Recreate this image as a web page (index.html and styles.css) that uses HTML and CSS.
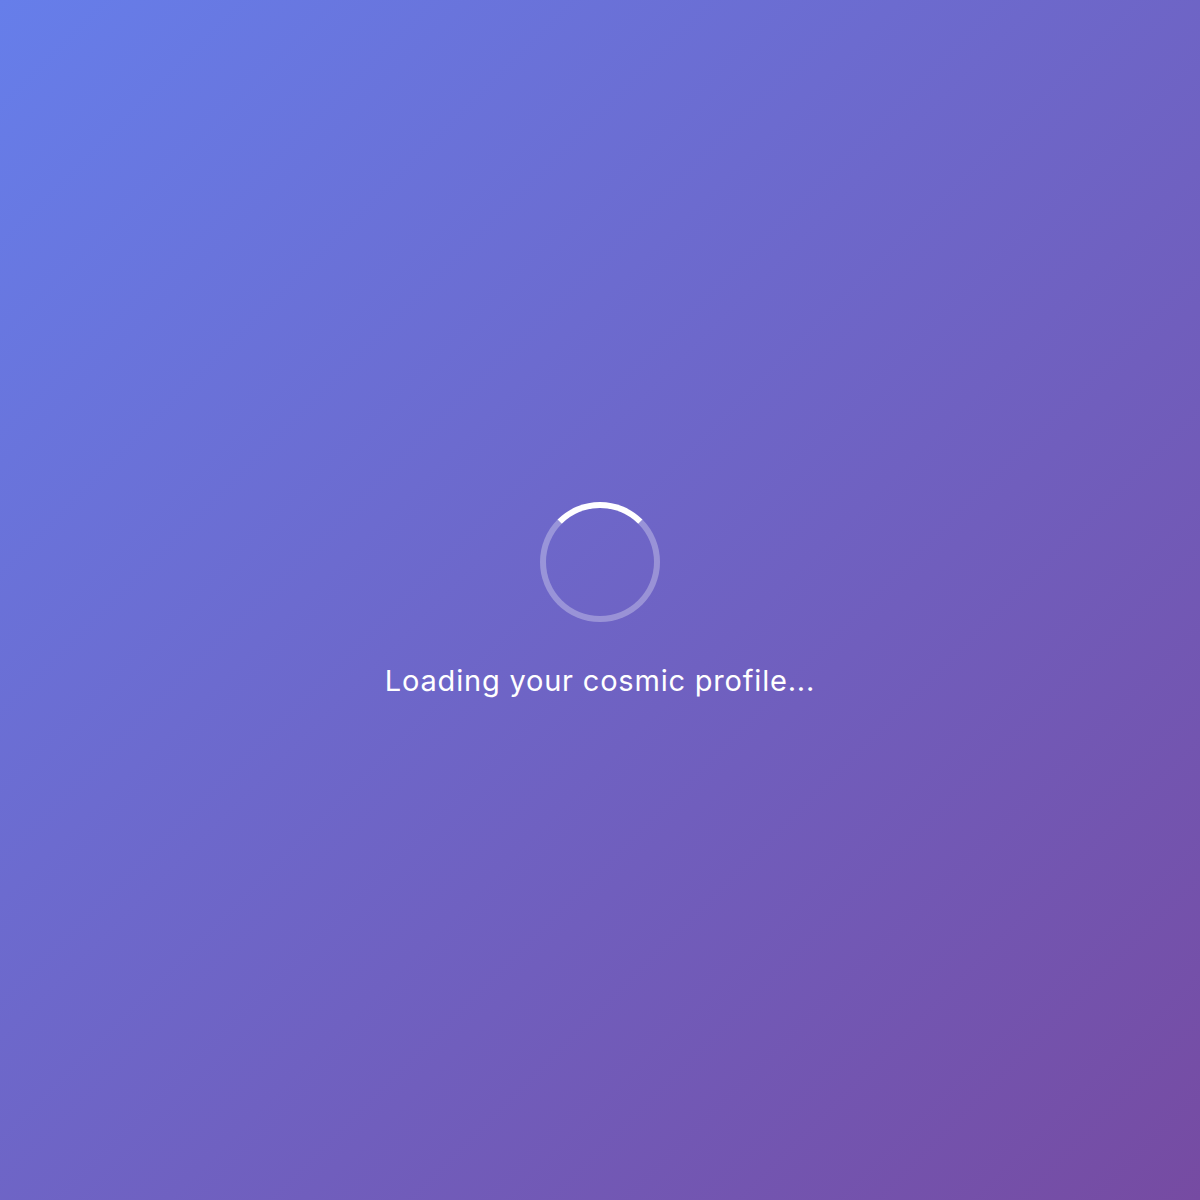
FILE: index.html
```html
<!DOCTYPE html>
<html lang="en">
<head>
<meta charset="utf-8">
<title>Loading</title>
<link rel="stylesheet" href="styles.css">
</head>
<body>
<div class="screen">
  <div class="loader">
    <div class="spinner"></div>
    <p class="label">Loading your cosmic profile...</p>
  </div>
</div>
</body>
</html>
```

FILE: styles.css
```css
html, body {
  margin: 0;
  padding: 0;
}
body {
  font-family: "Inter", "Liberation Sans", sans-serif;
}
.screen {
  width: 100%;
  height: 100vh;
  background: linear-gradient(135deg, #667eea 0%, #764ba2 100%);
  display: flex;
  align-items: center;
  justify-content: center;
}
.loader {
  display: flex;
  flex-direction: column;
  align-items: center;
}
.spinner {
  width: 108px;
  height: 108px;
  border: 6px solid rgba(255, 255, 255, 0.3);
  border-top-color: #ffffff;
  border-radius: 50%;
}
.label {
  margin: 41px 0 0;
  color: #ffffff;
  font-size: 29px;
  line-height: 36px;
  letter-spacing: 0.8px;
  font-weight: 400;
}
```
